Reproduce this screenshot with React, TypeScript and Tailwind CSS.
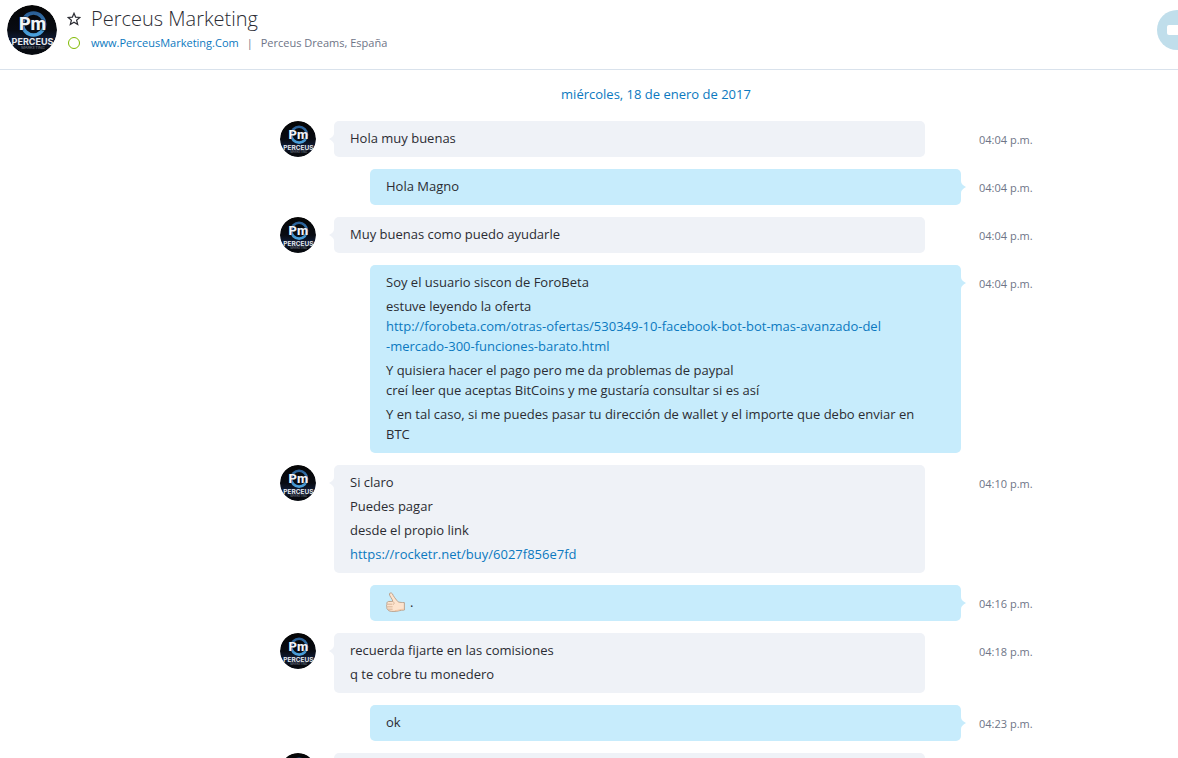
import React from 'react'

type Message = {
  own?: boolean
  time?: string
  lines: React.ReactNode[]
}

const linkClass = 'text-[#0b79c0] hover:underline'

function ThumbsUp() {
  return (
    <svg className="w-5 h-5" viewBox="0 0 20 20" role="img" aria-label="Thumbs up">
      <path
        d="M6.8 9.4 C6.4 6.6 3.4 4.4 3.4 2 C3.6 .6 5.6 .6 6.4 1.8 C7.4 4.2 9.2 6.4 11.2 8.8 C12 10.2 13 10.4 18.4 10.6 V18 C14 18 12 19.6 8 19.4 C5 19.5 2.6 19.2 1.8 17.8 C.8 16.8 .6 15.8 1 15 C.4 14 .4 13 1 12.3 C.6 11 1 9.8 2.4 9.5 Z"
        fill="#fde3cd"
        stroke="#b79c86"
        strokeWidth="0.9"
        strokeLinejoin="round"
      />
      <path d="M1.4 12.2 H6.4 M1.4 14.8 H6.6 M2 17.2 H6.6 M6.8 9.4 C8.6 10.8 8.4 12 7.2 12.6" fill="none" stroke="#cfa88a" strokeWidth="0.8" />
      <path d="M9 18.6 C12 18.6 14 17.2 18 17.2" fill="none" stroke="#f3c7a5" strokeWidth="1" />
    </svg>
  )
}

const messages: Message[] = [
  { time: '04:04 p.m.', lines: ['Hola muy buenas'] },
  { own: true, time: '04:04 p.m.', lines: ['Hola Magno'] },
  { time: '04:04 p.m.', lines: ['Muy buenas como puedo ayudarle'] },
  {
    own: true,
    time: '04:04 p.m.',
    lines: [
      'Soy el usuario siscon de ForoBeta',
      <>
        estuve leyendo la oferta
        <br />
        <a
          className={linkClass}
          href="http://forobeta.com/otras-ofertas/530349-10-facebook-bot-bot-mas-avanzado-del-mercado-300-funciones-barato.html"
        >
          http://forobeta.com/otras-ofertas/530349-10-facebook-bot-bot-mas-avanzado-del
          <br />
          -mercado-300-funciones-barato.html
        </a>
      </>,
      <>
        Y quisiera hacer el pago pero me da problemas de paypal
        <br />
        creí leer que aceptas BitCoins y me gustaría consultar si es así
      </>,
      <>
        Y en tal caso, si me puedes pasar tu dirección de wallet y el importe que debo enviar en
        <br />
        BTC
      </>,
    ],
  },
  {
    time: '04:10 p.m.',
    lines: [
      'Si claro',
      'Puedes pagar',
      'desde el propio link',
      <a className={linkClass} href="https://rocketr.net/buy/6027f856e7fd">
        https://rocketr.net/buy/6027f856e7fd
      </a>,
    ],
  },
  {
    own: true,
    time: '04:16 p.m.',
    lines: [
      <span className="flex gap-1">
        <ThumbsUp />.
      </span>,
    ],
  },
  { time: '04:18 p.m.', lines: ['recuerda fijarte en las comisiones', 'q te cobre tu monedero'] },
  { own: true, time: '04:23 p.m.', lines: ['ok'] },
  { lines: [] },
]

function Avatar({ className }: { className: string }) {
  return (
    <svg className={`rounded-full shrink-0 ${className}`} viewBox="0 0 50 50" role="img" aria-label="Perceus Marketing">
      <defs>
        <linearGradient id="night" x1="0" y1="0" x2="0" y2="1">
          <stop offset="0" stopColor="#050505" />
          <stop offset="0.5" stopColor="#080b12" />
          <stop offset="0.72" stopColor="#101d38" />
          <stop offset="0.9" stopColor="#070a10" />
        </linearGradient>
        <linearGradient id="ring" x1="0" y1="0" x2="0" y2="1">
          <stop offset="0" stopColor="#2a5f96" />
          <stop offset="1" stopColor="#4aa0dc" />
        </linearGradient>
      </defs>
      <circle cx="25" cy="25" r="25" fill="url(#night)" />
      <circle cx="26.5" cy="19" r="11" fill="none" stroke="url(#ring)" strokeWidth="3.6" />
      <text x="25.5" y="25" textAnchor="middle" fontSize="18" fontWeight="800" fill="#f1f4f8" stroke="#0b1524" strokeWidth="1" paintOrder="stroke" fontFamily="Roboto, sans-serif">
        Pm
      </text>
      <text x="25.5" y="40" textAnchor="middle" fontSize="9" fontWeight="700" fill="#e6e9ef" fontFamily="Inter, sans-serif">
        PERCEUS
      </text>
      <text x="26" y="44" textAnchor="middle" fontSize="4" fill="#7d828c" fontFamily="Inter, sans-serif">
        MARKETING
      </text>
    </svg>
  )
}

function Bubble({ message }: { message: Message }) {
  const own = message.own
  return (
    <div className={`relative flex-1 min-h-9 rounded-[5px] px-4 pt-[7px] pb-[9px] space-y-1 ${own ? 'ml-9 bg-[#c7ecfc]' : 'mr-9 bg-[#eff2f7]'}`}>
      <svg
        className={`absolute top-3 w-[5px] h-3 ${own ? 'left-full text-[#c7ecfc] -scale-x-100' : 'right-full text-[#eff2f7]'}`}
        viewBox="0 0 5 12"
      >
        <path d="M5 0 C5 3 3 4 0 6 C3 8 5 9 5 12 Z" fill="currentColor" />
      </svg>
      {message.lines.map((line, i) => (
        <p key={i}>{line}</p>
      ))}
    </div>
  )
}

export default function App() {
  return (
    <div className="h-screen overflow-hidden bg-white font-['Open_Sans','Noto_Sans',sans-serif] text-[13px] leading-5 text-[#2b2c33]">
      {/* Header */}
      <header className="flex items-start h-[70px] pl-[7px] border-b border-[#d9e2ec] overflow-hidden">
        <Avatar className="w-[50px] h-[50px] mt-[5px]" />
        <div className="flex-1 ml-2.5 pt-1.5">
          <div className="flex items-center">
            <button type="button" aria-label="Add to favorites" className="w-[14px] h-[14px]">
              <svg className="w-[14px] h-[14px]" viewBox="0 0 14 14" fill="none" stroke="#2b2c33" strokeWidth="1.2" strokeLinejoin="miter">
                <path d="M7 1.3 L8.6 5.1 L12.9 5.4 L9.6 8.2 L10.7 12.5 L7 10.2 L3.3 12.5 L4.4 8.2 L1.1 5.4 L5.4 5.1 Z" />
              </svg>
            </button>
            <h1 className="ml-2.5 text-[20px] leading-[26px] font-light">Perceus Marketing</h1>
          </div>
          <div className="flex items-center mt-1 text-[11px] leading-[14px] text-[#6e7587]">
            <span className="w-3 h-3 mx-px rounded-full border border-[#7fba00]" />
            <a href="http://www.PerceusMarketing.Com" className="ml-2.5 text-[#0b79c0]">
              www.PerceusMarketing.Com
            </a>
            <span className="mx-2">|</span>
            <span>Perceus Dreams, España</span>
          </div>
        </div>
        <button type="button" aria-label="Video call" className="shrink-0 w-10 h-10 mt-2.5 -mr-[19px] rounded-full bg-[#c0deeb]">
          <svg className="w-10 h-10" viewBox="0 0 40 40" fill="#fff">
            <rect x="10" y="15" width="14" height="10" rx="2" />
            <path d="M25 18 L31 14 V26 L25 22 Z" />
          </svg>
        </button>
      </header>

      {/* Conversation */}
      <main className="pl-[134px] pt-3.5">
        <div className="max-w-[752px] mx-auto">
          <h2 className="mb-[17px] text-center text-[#0b79c0]">miércoles, 18 de enero de 2017</h2>
          <ul className="space-y-3">
            {messages.map((message, i) => (
              <li key={i} className="flex items-start gap-[18px]">
                {message.own ? <div className="w-9 shrink-0" /> : <Avatar className="w-9 h-9" />}
                <Bubble message={message} />
                <time className="w-[53px] shrink-0 pt-2.5 text-[11px] leading-[18px] whitespace-nowrap text-[#6e7587]">
                  {message.time}
                </time>
              </li>
            ))}
          </ul>
        </div>
      </main>
    </div>
  )
}
